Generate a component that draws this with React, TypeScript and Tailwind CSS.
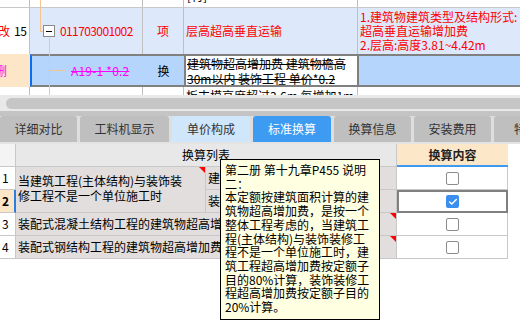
import { Check } from "lucide-react";

const tipLines = [
  "第二册 第十九章P455 说明",
  "二：",
  "本定额按建筑面积计算的建",
  "筑物超高增加费，是按一个",
  "整体工程考虑的，当建筑工",
  "程(主体结构)与装饰装修工",
  "程不是一个单位施工时，建",
  "筑工程超高增加费按定额子",
  "目的80%计算，装饰装修工",
  "程超高增加费按定额子目的",
  "20%计算。",
];

const tabs = [
  { label: "详细对比", w: "w-[77px]", style: "bg-[#bfbfbf] text-[#333]" },
  { label: "工料机显示", w: "w-[89px]", style: "bg-[#bfbfbf] text-[#333]" },
  { label: "单价构成", w: "w-[78px]", style: "bg-[#cfe6fb] text-[#333]" },
  { label: "标准换算", w: "w-[78px]", style: "bg-[#3d9bf2] text-white" },
  { label: "换算信息", w: "w-[77px]", style: "bg-[#bfbfbf] text-[#333]" },
  { label: "安装费用", w: "w-[77px]", style: "bg-[#bfbfbf] text-[#333]" },
  { label: "特殊费用", w: "w-[88px]", style: "bg-[#bfbfbf] text-[#333]" },
];

const RedCorner = () => (
  <svg className="absolute right-0 top-0" width="6" height="6" viewBox="0 0 6 6">
    <polygon points="0,0 6,0 6,6" fill="#ff0000" />
  </svg>
);

const Box = ({ checked }: { checked?: boolean }) =>
  checked ? (
    <div className="flex h-[13px] w-[13px] items-center justify-center rounded-[2px] bg-[#3b8ef0]">
      <Check size={10} strokeWidth={3.5} className="text-white" />
    </div>
  ) : (
    <div className="h-[13px] w-[13px] rounded-[2px] border border-[#8c8c8c] bg-white" />
  );

export default function App() {
  return (
    <div className="relative h-[333px] w-[520px] overflow-hidden bg-white font-['Noto_Sans_CJK_SC',sans-serif] text-[12px] text-black">
      {/* upper grid */}
      <div className="flex h-[8px] overflow-hidden border-b border-[#c8c8c8]">
        <div className="w-[30px] border-r border-[#c0c0c0]" />
        <div className="relative w-[113px] border-r border-[#c0c0c0]">
          <span className="absolute left-[10px] top-0 h-full w-px bg-[#f6c48a]" />
        </div>
        <div className="w-[41px] border-r border-[#c0c0c0]" />
        <div className="w-[174px] border-r border-[#c0c0c0] pl-[3px] leading-[12px]">
          <span className="block mt-[-10px]">[材]</span>
        </div>
        <div className="flex-1" />
      </div>

      <div className="flex h-[46px] bg-[#dde9fb]">
        <div className="flex w-[30px] items-center overflow-hidden border-r border-[#c0c0c0] bg-white">
          <span className="ml-[-2px] shrink-0 text-[#ff0000]">改</span>
          <span className="ml-[4px] shrink-0 tracking-[-0.5px]">15</span>
        </div>
        <div className="relative flex w-[113px] items-center border-r border-[#c0c0c0]">
          <span className="absolute left-[10px] top-0 h-[24px] w-px bg-[#f6c48a]" />
          <span className="absolute left-[10px] top-[23px] h-px w-[3px] bg-[#f6c48a]" />
          <span className="absolute left-[19px] top-[30px] bottom-0 w-px bg-[#f6c48a]" />
          <div className="absolute left-[13px] top-[17px] flex h-[12px] w-[12px] items-center justify-center border border-[#8a8a8a] bg-white">
            <span className="h-px w-[6px] bg-black" />
          </div>
          <span className="ml-[30px] tracking-[-0.6px] text-[#ff0000]">011703001002</span>
        </div>
        <div className="flex w-[41px] items-center justify-center border-r border-[#c0c0c0] text-[#ff0000]">项</div>
        <div className="flex w-[174px] items-center border-r border-[#c0c0c0] pl-[2px] text-[#ff0000]">层高超高垂直运输</div>
        <div className="flex-1 overflow-hidden whitespace-nowrap pl-[2px] pt-[2px] leading-[14px] text-[#ff0000]">
          <div>1.建筑物建筑类型及结构形式:</div>
          <div>超高垂直运输增加费</div>
          <div>2.层高:高度3.81~4.42m</div>
        </div>
      </div>

      <div className="flex h-[33px]">
        <div className="flex w-[30px] items-center overflow-hidden bg-[#fde6c8]">
          <span className="ml-[-5px] shrink-0 text-[#ff00ff]">删</span>
        </div>
        <div className="flex flex-1 border-y-2 border-l-2 border-y-[#808080] border-l-[#0a6cf0] bg-[#b5d5fc]">
          <div className="relative flex w-[111px] items-center">
            <span className="absolute left-[17px] top-[-2px] bottom-[-2px] w-px bg-[#f6c48a]" />
            <span className="absolute left-[17px] top-[14px] h-px w-[16px] bg-[#f6c48a]" />
            <span className="ml-[39px] tracking-[0.2px] text-[#ff00ff] line-through">A19-1 *0.2</span>
          </div>
          <div className="flex w-[41px] items-center justify-center">换</div>
          <div className="w-[175px] overflow-hidden whitespace-nowrap border-x-2 border-[#808080] bg-white pl-[1px] leading-[15px] line-through">
            <div>建筑物超高增加费 建筑物檐高</div>
            <div>30m以内 装饰工程 单价*0.2</div>
          </div>
          <div className="flex-1" />
        </div>
      </div>

      <div className="flex h-[8px] overflow-hidden">
        <div className="w-[30px] border-r border-[#c0c0c0]" />
        <div className="relative w-[113px] border-r border-[#c0c0c0]">
          <span className="absolute left-[19px] top-0 h-full w-px bg-[#f6c48a]" />
        </div>
        <div className="w-[41px] border-r border-[#c0c0c0]" />
        <div className="w-[174px] whitespace-nowrap border-r border-[#c0c0c0] pl-[2px] pt-[2px] leading-[14px]">板支模高度超过3.6m 每增加1m</div>
        <div className="flex-1" />
      </div>

      {/* horizontal scrollbar */}
      <div className="h-[16px] bg-[#e9e9e9] pl-[6px] pt-[3px]">
        <div className="h-[11px] rounded-l-full bg-[#c6c6c6]" />
      </div>

      {/* tab strip */}
      <div className="h-[5px] bg-[#c4c4c4]" />
      <div className="flex h-[26px] gap-[3px] bg-[#dedede]">
        {tabs.map((t) => (
          <div
            key={t.label}
            className={`${t.w} ${t.style} flex shrink-0 items-center justify-center rounded-t-[3px] whitespace-nowrap`}
          >
            {t.label}
          </div>
        ))}
      </div>

      {/* lower grid */}
      <div className="h-[2px] bg-[#e4e4e4]" />
      <div className="flex h-[23px]">
        <div className="w-[16px] border-b border-r border-[#c8c8c8] bg-[#f4f4f4]" />
        <div className="flex w-[381px] items-center justify-center border-b border-r border-[#c8c8c8] bg-[#e8e8e8]">换算列表</div>
        <div className="flex w-[111px] items-center justify-center border-b-2 border-[#3d9af0] bg-[#fde7c9] font-bold text-[#222]">换算内容</div>
        <div className="flex-1" />
      </div>

      <div className="grid grid-cols-[16px_190px_191px_111px] grid-rows-[23px_23px_23px_23px]">
        <div className="border-b border-r border-[#c8c8c8] pl-[2px] leading-[22px]">1</div>
        <div className="relative row-span-2 border-b border-r border-[#c8c8c8] bg-[#e2dedd] pl-[2px] pt-[6px] leading-[15px] whitespace-nowrap">
          <div>当建筑工程(主体结构)与装饰装</div>
          <div>修工程不是一个单位施工时</div>
          <RedCorner />
        </div>
        <div className="flex items-center overflow-hidden whitespace-nowrap border-b border-r border-[#c8c8c8] bg-[#e2dedd] pl-[2px]">建筑工程超高增加费 *0.8</div>
        <div className="flex items-center justify-center border-b border-r border-[#c8c8c8]">
          <Box />
        </div>

        <div className="border-b border-r-2 border-b-[#c8c8c8] border-r-[#2a7de1] bg-[#fde6c8] pl-[2px] font-bold leading-[22px]">2</div>
        <div className="flex items-center overflow-hidden whitespace-nowrap border-b border-r border-[#c8c8c8] bg-[#e2dedd] pl-[2px]">装饰工程超高增加费 *0.2</div>
        <div className="flex items-center justify-center border-2 border-[#808080]">
          <Box checked />
        </div>

        <div className="border-b border-r border-[#c8c8c8] pl-[2px] leading-[22px]">3</div>
        <div className="relative col-span-2 flex items-center overflow-hidden whitespace-nowrap border-b border-r border-[#c8c8c8] bg-[#e2dedd] pl-[2px]">
          装配式混凝土结构工程的建筑物超高增加费
          <RedCorner />
        </div>
        <div className="flex items-center justify-center border-b border-r border-[#c8c8c8]">
          <Box />
        </div>

        <div className="border-b border-r border-[#c8c8c8] pl-[2px] leading-[22px]">4</div>
        <div className="relative col-span-2 flex items-center overflow-hidden whitespace-nowrap border-b border-r border-[#c8c8c8] bg-[#e2dedd] pl-[2px]">
          装配式钢结构工程的建筑物超高增加费
          <RedCorner />
        </div>
        <div className="flex items-center justify-center border-b border-r border-[#c8c8c8]">
          <Box />
        </div>
      </div>

      {/* tooltip */}
      <div className="absolute left-[220px] top-[159px] h-[161px] w-[160px] border border-black bg-[#ffffe1] px-[4px] pt-[3px] leading-[13.7px] whitespace-nowrap">
        {tipLines.map((l, i) => (
          <div key={i}>{l}</div>
        ))}
      </div>
    </div>
  );
}
